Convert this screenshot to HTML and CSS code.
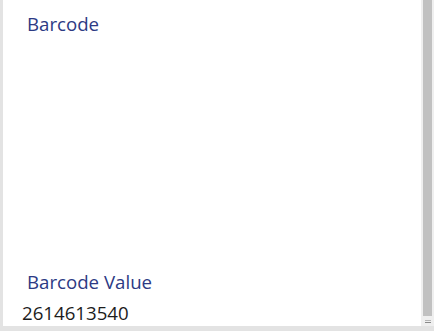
FILE: index.html
```html
<!DOCTYPE html>
<html>
<head>
<meta charset="utf-8">
<link rel="stylesheet" href="styles.css">
</head>
<body>
<div class="frame">
  <div class="panel">
    <div class="content">
      <div class="label title">Barcode</div>
      <div class="spacer"></div>
      <div class="label">Barcode Value</div>
      <div class="value">2614613540</div>
    </div>
    <div class="scrollbar">
      <div class="thumb"></div>
      <div class="arrow"></div>
    </div>
  </div>
</div>
</body>
</html>
```
FILE: styles.css
```css
html, body { margin: 0; padding: 0; }
body { width: 434px; height: 331px; overflow: hidden; background: #e6e6e6; font-family: "Open Sans", sans-serif; }
.frame { width: 434px; height: 331px; box-sizing: border-box; padding: 0 0 5px 3px; background: #e3e3e3; }
.panel { display: flex; height: 100%; background: #fff; }
.content { flex: 1; display: flex; flex-direction: column; padding: 12px 0 0 0; }
.label { color: #2c3a84; font-size: 18.67px; line-height: 24px; padding-left: 24px; }
.spacer { flex: 1; }
.value { color: #1c1c1c; font-size: 18.67px; line-height: 24px; padding-left: 19px; margin: 7px 0 1px 0; }
.scrollbar { width: 13px; background: #efefef; display: flex; flex-direction: column; align-items: center; }
.thumb { width: 9px; height: 316px; background: #c1c1c1; }
.arrow { margin-top: 4px; width: 6px; height: 1px; border-top: 1px solid #b5b5b5; border-bottom: 1px solid #8a8a8a; }
```
